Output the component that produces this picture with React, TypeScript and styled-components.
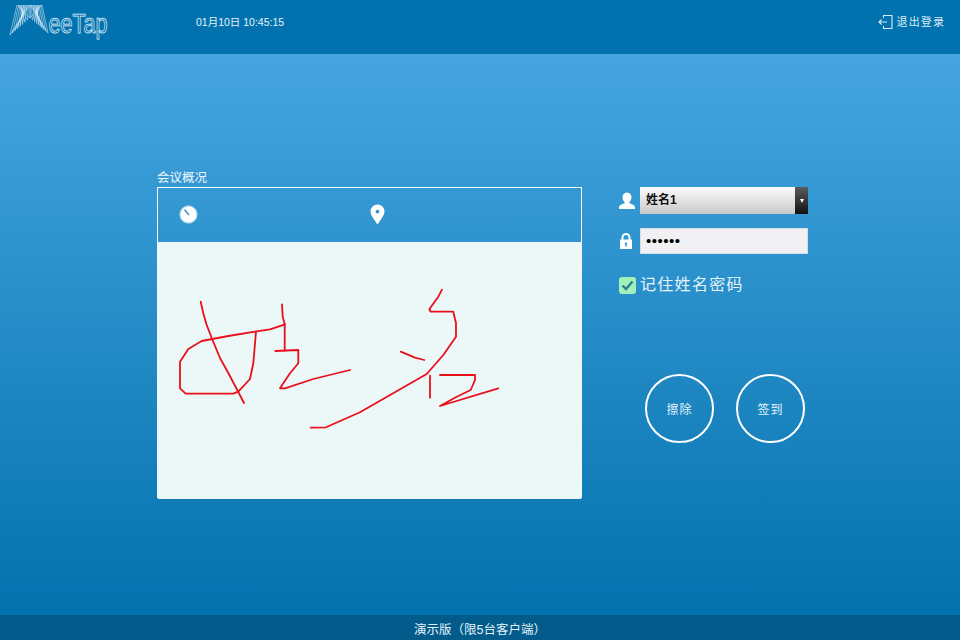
import styled, { createGlobalStyle } from "styled-components"

const GlobalStyle = createGlobalStyle`
  html, body {
    margin: 0;
    padding: 0;
    width: 960px;
    height: 640px;
    overflow: hidden;
    font-family: "Liberation Sans", "Noto Sans CJK SC", sans-serif;
  }
`

const Page = styled.div`
  width: 960px;
  height: 640px;
  display: flex;
  flex-direction: column;
  color: #ffffff;
`
const Header = styled.header`
  height: 54px;
  flex: none;
  display: flex;
  align-items: flex-start;
  background: #0272ae;
`
const Logo = styled.svg`
  width: 100px;
  height: 38px;
  margin: 4px 0 0 9px;
  flex: none;
  overflow: visible;
`
const Clock = styled.div`
  margin: 16px 0 0 87px;
  font-size: 10.5px;
  line-height: 13px;
  color: #e4f2fa;
`
const Logout = styled.div`
  margin: 14px 15px 0 auto;
  display: flex;
  align-items: center;
  gap: 3px;
  font-size: 11px;
  line-height: 15px;
  letter-spacing: 1.1px;
  color: #d7ecf8;
`
const Main = styled.main`
  flex: 1;
  display: flex;
  align-items: flex-start;
  padding: 115px 0 0 157px;
  background: linear-gradient(180deg, #46a5df 0%, #0272ae 100%);
`
const Overview = styled.section`
  width: 425px;
  flex: none;
`
const OverviewTitle = styled.div`
  height: 18px;
  font-size: 12.5px;
  line-height: 18px;
  color: #f0f8fd;
`
const InfoBar = styled.div`
  height: 53px;
  display: flex;
  align-items: center;
  padding: 0 0 1px 21px;
  gap: 172px;
  border: 1px solid #ffffff;
  border-bottom: none;
`
const SignArea = styled.div`
  height: 257px;
  background: #ecf7f8;
  border-bottom-left-radius: 2px;
  border-bottom-right-radius: 2px;
`
const Ink = styled.svg`
  display: block;
  width: 425px;
  height: 257px;
  fill: none;
  stroke: #e8101a;
  stroke-width: 1.8;
  stroke-linejoin: round;
  stroke-linecap: round;
`
const Side = styled.section`
  width: 190px;
  margin: 18px 0 0 36px;
  display: flex;
  flex-direction: column;
`
const FieldRow = styled.div<{ $gap: number }>`
  display: flex;
  align-items: center;
  height: 27px;
  margin-bottom: ${({ $gap }) => $gap}px;
`
const FieldIcon = styled.svg`
  width: 22px;
  height: 18px;
  flex: none;
`
const NameSelect = styled.div`
  width: 168px;
  height: 27px;
  display: flex;
  align-items: stretch;
  background: linear-gradient(180deg, #fbfbfb 0%, #c9c9c9 100%);
  color: #111111;
  font-size: 12px;
  font-weight: 700;
  line-height: 27px;
`
const NameValue = styled.span`
  flex: 1;
  padding-left: 6px;
`
const SelectArrow = styled.span`
  width: 13px;
  display: flex;
  align-items: center;
  justify-content: center;
  background: linear-gradient(180deg, #5c5c5c 0%, #111111 100%);
  &::after {
    content: "";
    border-left: 2.5px solid transparent;
    border-right: 2.5px solid transparent;
    border-top: 4px solid #ffffff;
  }
`
const Password = styled.input`
  width: 168px;
  height: 26px;
  box-sizing: border-box;
  padding: 0 0 0 5px;
  border: 1px solid #cfe0ea;
  background: #f1f1f3;
  color: #000000;
  font-family: "Liberation Sans", sans-serif;
  font-size: 15px;
  letter-spacing: 0.5px;
  outline: none;
`
const Remember = styled.label`
  display: flex;
  align-items: center;
  height: 18px;
  font-size: 16px;
  line-height: 18px;
  letter-spacing: 1.3px;
  color: #e6f4fc;
`
const CheckMark = styled.span`
  width: 17px;
  height: 17px;
  margin: 0 4px 0 1px;
  flex: none;
  display: flex;
  align-items: center;
  justify-content: center;
  border-radius: 3px;
  background: #a2f0b9;
`
const Actions = styled.div`
  display: flex;
  gap: 22px;
  margin: 80px 0 0 27px;
`
const RoundButton = styled.button`
  width: 69px;
  height: 69px;
  padding: 0;
  border: 2px solid #ffffff;
  border-radius: 50%;
  background: transparent;
  color: #e6f4fc;
  font-family: inherit;
  font-size: 12px;
  letter-spacing: 1px;
`
const Footer = styled.footer`
  height: 25px;
  flex: none;
  background: #035b8b;
  text-align: center;
  font-size: 12.5px;
  line-height: 30px;
  color: #e4f2fa;
  overflow: hidden;
`

// signature strokes, in page coordinates
const strokes = [
  "200.7,301.7 203.3,313.3 206.7,325 211.7,338 220,358 228.3,373 238.3,392 244,403",
  "285,324.3 270,329.3 255,331.7 228.3,336 201.7,341 188.3,349 180,361.7 180,388.3 185.7,393.7 233.3,393.7 238.3,391.7 250,379 253.3,363.3 256,331.7",
  "282,304.3 282.7,316.7 284.7,324.3 284.7,350.7",
  "275.3,351 298.3,350 298.3,363.3 290,373.3 280,388.3 285,388.3 313.3,379 350,370",
  "310.7,427.7 326,427.3 360,412.3 426.7,374 443.3,355 456,336.7 456,323.3 453.3,311.7 430.7,311.7 429.3,309.3 438.3,296.7 442,289.7",
  "400.7,351.7 415,357.7 424.3,360",
  "430,375.7 430,397.7",
  "440,375 475,375 475,380 470.7,390 456.7,396.7 440,406 498.3,388.3",
]

// the woven "M" of the logo: strands run from the inner arch up to the top ridge
const STRANDS = 9
const meshLines = Array.from({ length: STRANDS }, (_, i) => {
  const t = i / (STRANDS - 1)
  const left = [1 + t * 20, 31 - t * 17]
  const right = [39 - t * 18, 29 - t * 15]
  return [
    `M${left[0]} ${left[1]} L${8 + t * 13} 1`,
    `M${left[0]} ${left[1]} L${21 - t * 13} 1`,
    `M${right[0]} ${right[1]} L${33 - t * 12} 1`,
    `M${right[0]} ${right[1]} L${21 + t * 12} 1`,
  ]
}).flat()

export default function App() {
  return (
    <Page>
      <GlobalStyle />
      <Header>
        <Logo viewBox="0 0 100 38" fill="none" stroke="#e6f5fd" strokeWidth="0.5">
          {meshLines.map((d) => (
            <path key={d} d={d} />
          ))}
          <text
            x="39.500"
            y="29"
            fontFamily="Liberation Sans"
            fontSize="28"
            strokeWidth="0.75"
            textLength="59"
            lengthAdjust="spacingAndGlyphs"
          >
            eeTap
          </text>
        </Logo>
        <Clock>01月10日 10:45:15</Clock>
        <Logout>
          <svg width="16" height="16" viewBox="0 0 16 16" fill="none" stroke="#d7ecf8" strokeWidth="1.1">
            <path d="M5.500 4V1.500h8.500v13H5.500V12" />
            <path d="M9 8H1M3.500 5.500 1 8l2.500 2.500" />
          </svg>
          退出登录
        </Logout>
      </Header>
      <Main>
        <Overview>
          <OverviewTitle>会议概况</OverviewTitle>
          <InfoBar>
            <svg width="19" height="19" viewBox="0 0 19 19">
              <circle cx="9.500" cy="9.500" r="9.200" fill="#ffffff" fillOpacity="0.55" />
              <circle cx="9.500" cy="9.500" r="8" fill="#ffffff" />
              <path d="M5.500 4.500 10 10" stroke="#3b8fc7" strokeWidth="1.400" />
            </svg>
            <svg width="15" height="21" viewBox="0 0 15 21">
              <path
                fillRule="evenodd"
                fill="#ffffff"
                d="M7.500 0.500a7 7 0 0 1 7 7c0 4-4.500 9-7 13c-2.500-4-7-9-7-13a7 7 0 0 1 7-7zm0 5.200a1.900 1.900 0 1 0 0 3.800a1.900 1.900 0 0 0 0-3.800z"
              />
            </svg>
          </InfoBar>
          <SignArea>
            <Ink viewBox="157 242 425 257">
              {strokes.map((points) => (
                <polyline key={points} points={points} />
              ))}
            </Ink>
          </SignArea>
        </Overview>
        <Side>
          <FieldRow $gap={13}>
            <FieldIcon viewBox="0 0 22 18">
              <path
                fill="#ffffff"
                d="M9 0.500c3 0 4.500 2.200 4.500 4.800c0 2-0.800 3.600-2 4.500v1.400c2 0.900 5.500 1.600 5.500 4.300v1.500H1v-1.500c0-2.700 3.500-3.400 5.500-4.300V9.800c-1.200-0.900-2-2.500-2-4.500C4.500 2.700 6 0.500 9 0.500z"
              />
            </FieldIcon>
            <NameSelect>
              <NameValue>姓名1</NameValue>
              <SelectArrow />
            </NameSelect>
          </FieldRow>
          <FieldRow $gap={22}>
            <FieldIcon viewBox="0 0 22 18">
              <path
                fillRule="evenodd"
                fill="#ffffff"
                d="M2 7.500h1.500V5.500a4.500 4.500 0 0 1 9 0v2H14v9.500H2zM5.500 7.500h5V5.500a2.500 2.500 0 0 0-5 0zM8 10.500a1.300 1.300 0 0 0-.6 2.400v1.800h1.200v-1.800A1.300 1.300 0 0 0 8 10.500z"
              />
            </FieldIcon>
            <Password type="password" value="123456" readOnly />
          </FieldRow>
          <Remember>
            <CheckMark>
              <svg width="13" height="11" viewBox="0 0 13 11" fill="none" stroke="#2b7f8f" strokeWidth="2.400">
                <path d="M1.500 5.500 5 9l6.500-7.500" />
              </svg>
            </CheckMark>
            记住姓名密码
          </Remember>
          <Actions>
            <RoundButton>擦除</RoundButton>
            <RoundButton>签到</RoundButton>
          </Actions>
        </Side>
      </Main>
      <Footer>演示版（限5台客户端）</Footer>
    </Page>
  )
}
